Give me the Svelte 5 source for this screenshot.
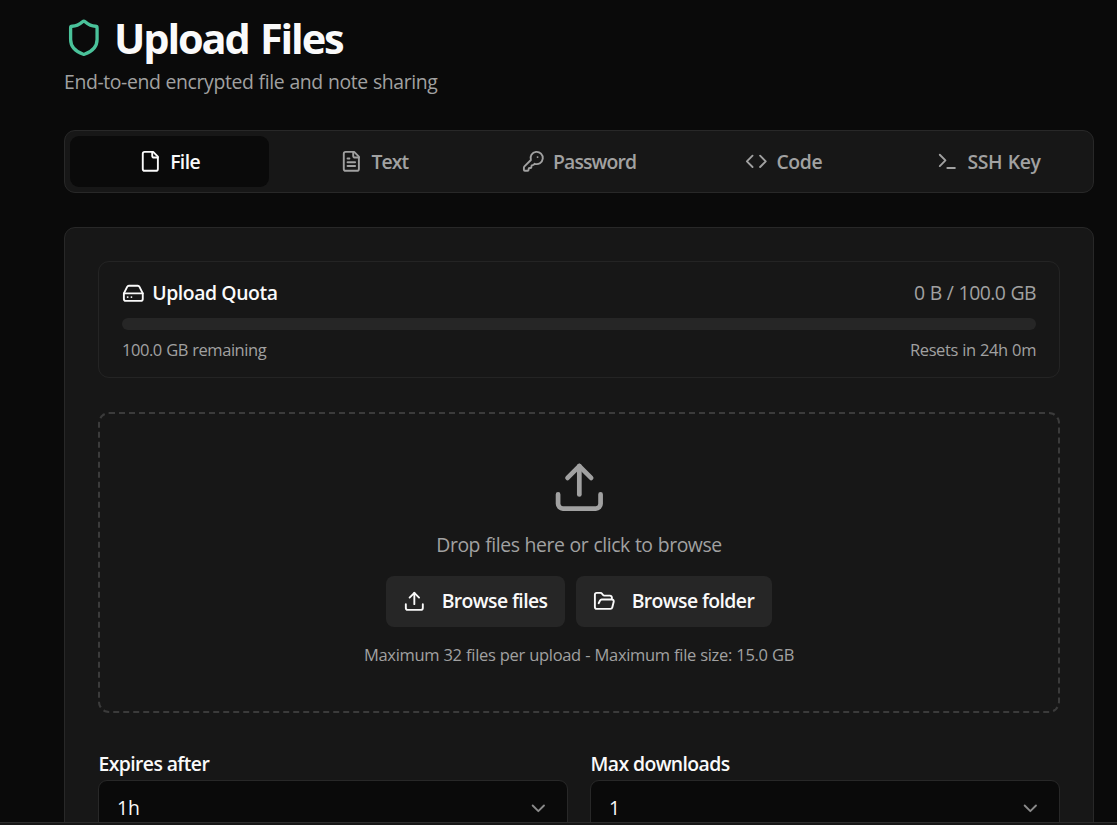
<script>
  const icons = {
    shield: ['M20 13c0 5-3.500 7.500-7.660 8.950a1 1 0 0 1-.67-.01C7.500 20.500 4 18 4 13V6a1 1 0 0 1 1-1c2 0 4.500-1.200 6.240-2.720a1.170 1.170 0 0 1 1.520 0C14.510 3.810 17 5 19 5a1 1 0 0 1 1 1z'],
    file: ['M15 2H6a2 2 0 0 0-2 2v16a2 2 0 0 0 2 2h12a2 2 0 0 0 2-2V7Z', 'M14 2v4a2 2 0 0 0 2 2h4'],
    text: ['M15 2H6a2 2 0 0 0-2 2v16a2 2 0 0 0 2 2h12a2 2 0 0 0 2-2V7Z', 'M14 2v4a2 2 0 0 0 2 2h4', 'M10 9H8', 'M16 13H8', 'M16 17H8'],
    key: ['M2.586 17.414A2 2 0 0 0 2 18.828V21a1 1 0 0 0 1 1h3a1 1 0 0 0 1-1v-1a1 1 0 0 1 1-1h1a1 1 0 0 0 1-1v-1a1 1 0 0 1 1-1h.172a2 2 0 0 0 1.414-.586l.814-.814a6.500 6.500 0 1 0-4-4z', 'M16.500 7.500h.01'],
    code: ['m16 18 6-6-6-6', 'm8 6-6 6 6 6'],
    terminal: ['M12 19h8', 'm4 17 6-6-6-6'],
    drive: ['M22 12H2', 'M5.450 5.110 2 12v6a2 2 0 0 0 2 2h16a2 2 0 0 0 2-2v-6l-3.450-6.890A2 2 0 0 0 16.760 4H7.240a2 2 0 0 0-1.790 1.110z', 'M6 16h.01', 'M10 16h.01'],
    upload: ['M12 3v12', 'm17 8-5-5-5 5', 'M21 15v4a2 2 0 0 1-2 2H5a2 2 0 0 1-2-2v-4'],
    folder: ['m6 14 1.500-2.900A2 2 0 0 1 9.240 10H20a2 2 0 0 1 1.940 2.500l-1.540 6a2 2 0 0 1-1.950 1.500H4a2 2 0 0 1-2-2V5a2 2 0 0 1 2-2h3.900a2 2 0 0 1 1.690.900l.810 1.200a2 2 0 0 0 1.670.900H18a2 2 0 0 1 2 2v2'],
    chevron: ['m6 9 6 6 6-6']
  };
  const tabs = [
    ['file', 'File'],
    ['text', 'Text'],
    ['key', 'Password'],
    ['code', 'Code'],
    ['terminal', 'SSH Key']
  ];
  let active = $state('file');
</script>

{#snippet icon(name)}
  <svg class="icon {name}" viewBox="0 0 24 24" aria-hidden="true">
    {#each icons[name] as d}<path {d} />{/each}
  </svg>
{/snippet}

<div class="shell">
  <main>
    <header>
      <div class="title">{@render icon('shield')}<h1>Upload Files</h1></div>
      <p class="subtitle">End-to-end encrypted file and note sharing</p>
    </header>

    <nav>
      {#each tabs as [id, label]}
        <button class="tab t-{id}" class:active={active === id} onclick={() => (active = id)}>
          {@render icon(id)}<span>{label}</span>
        </button>
      {/each}
    </nav>

    <section class="card">
      <div class="quota">
        <div class="row top">
          <span class="name">{@render icon('drive')}<b>Upload Quota</b></span>
          <span class="used">0 B / 100.0 GB</span>
        </div>
        <div class="bar"></div>
        <div class="row small">
          <span class="remain">100.0 GB remaining</span>
          <span class="resets">Resets in 24h 0m</span>
        </div>
      </div>

      <div class="drop">
        <div class="big">{@render icon('upload')}</div>
        <p class="hint">Drop files here or click to browse</p>
        <div class="buttons">
          <button class="browse files">{@render icon('upload')}<span>Browse files</span></button>
          <button class="browse dir">{@render icon('folder')}<span>Browse folder</span></button>
        </div>
        <p class="limits">Maximum 32 files per upload - Maximum file size: 15.0 GB</p>
      </div>

      <div class="fields">
        <div class="field">
          <span class="label expires">Expires after</span>
          <button class="select"><span>1h</span>{@render icon('chevron')}</button>
        </div>
        <div class="field">
          <span class="label max">Max downloads</span>
          <button class="select"><span>1</span>{@render icon('chevron')}</button>
        </div>
      </div>
    </section>
  </main>
  <footer></footer>
</div>

<style>
  :global(body) { background: #0a0a0a; overflow: hidden; }
  * { box-sizing: border-box; }
  .shell {
    height: 825px;
    display: flex;
    flex-direction: column;
    background: #0a0a0a;
    color: #fafafa;
    font: 19.4px/28px 'Segoe UI', 'Open Sans', 'Noto Sans', sans-serif;
    white-space: nowrap;
  }
  main { flex: 1; min-height: 0; overflow: hidden; padding: 11px 23px 0 64px; }
  footer { height: 3px; flex: none; background: #171717; border-top: 1px solid #2c2c2c; }
  h1, p { margin: 0; }
  button { font: inherit; color: inherit; border: 0; padding: 0; background: none; letter-spacing: inherit; }
  .icon {
    width: 22.67px;
    height: 22.67px;
    flex: none;
    display: block;
    fill: none;
    stroke: currentColor;
    stroke-width: 2;
    stroke-linecap: round;
    stroke-linejoin: round;
  }

  .title { display: flex; align-items: center; gap: 10.3px; height: 53px; }
  .title .icon { width: 39.7px; height: 39.7px; color: #4ac29a; }
  h1 { font-size: 41.500px; line-height: 53px; padding-top: 2px; font-weight: 700; letter-spacing: -2.1px; word-spacing: 2.5px; }
  .subtitle { height: 28px; margin-top: 4px; color: #a1a1a1; letter-spacing: -0.38px; word-spacing: 0.5px; }

  nav {
    width: 1030px;
    height: 63px;
    margin-top: 34px;
    padding: 5px;
    display: grid;
    grid-template-columns: repeat(5, 1fr);
    gap: 5.67px;
    background: #171717;
    border: 1px solid #282828;
    border-radius: 11px;
  }
  .tab {
    display: flex;
    align-items: center;
    justify-content: center;
    gap: 8.5px;
    height: 51px;
    border-radius: 9px;
    color: #a1a1a1;
    font-weight: 600;
    letter-spacing: -0.6px;
  }
  .tab.active { background: #0a0a0a; color: #fafafa; }
  .t-text { letter-spacing: -0.95px; }
  .t-key { letter-spacing: -0.88px; }
  .t-code { letter-spacing: -0.4px; }
  .t-terminal { letter-spacing: -0.4px; word-spacing: 0.8px; }

  .card {
    width: 1030px;
    height: 700px;
    margin-top: 34px;
    padding: 33px;
    background: #171717;
    border: 1px solid #282828;
    border-radius: 11px;
  }
  .quota { height: 117px; padding: 17px 23px; border: 1px solid #242424; border-radius: 11px; }
  .row { display: flex; justify-content: space-between; align-items: center; color: #a1a1a1; }
  .row.top { height: 28px; }
  .name { display: flex; align-items: center; gap: 7.5px; color: #fafafa; }
  b { font-weight: 600; letter-spacing: -0.42px; }
  .used { letter-spacing: -0.55px; word-spacing: 0.7px; }
  .bar { height: 12px; margin: 11px 0 8px; border-radius: 6px; background: #262626; }
  .small { height: 24px; font-size: 16.5px; letter-spacing: -0.45px; word-spacing: 0.5px; }
  .resets { letter-spacing: -0.42px; }

  .drop {
    height: 301px;
    margin-top: 34px;
    padding-top: 44.5px;
    display: flex;
    flex-direction: column;
    align-items: center;
    border: 2px dashed #3b3b3b;
    border-radius: 11px;
    color: #a1a1a1;
  }
  .big .icon { width: 56.67px; height: 56.67px; }
  .hint { margin-top: 16.33px; letter-spacing: -0.43px; word-spacing: 0.5px; }
  .buttons { display: flex; gap: 11px; margin-top: 17px; }
  .browse {
    height: 51px;
    width: 179px;
    padding: 0 17px 1px;
    display: flex;
    align-items: center;
    gap: 16px;
    border-radius: 8px;
    background: #262626;
    color: #fafafa;
    font-weight: 600;
    letter-spacing: -0.6px;
  }
  .dir { width: 196px; }
  .limits { margin-top: 14px; font-size: 16.5px; letter-spacing: -0.33px; word-spacing: 0.4px; }

  .fields { display: grid; grid-template-columns: 1fr 1fr; gap: 22px; margin-top: 37px; }
  .label { display: block; height: 30px; padding-left: 0.5px; font-weight: 600; letter-spacing: -0.6px; }
  .select {
    width: 100%;
    height: 57px;
    padding: 0 17px 1px 18px;
    display: flex;
    align-items: center;
    justify-content: space-between;
    background: #0a0a0a;
    border: 1px solid #282828;
    border-radius: 9px;
  }
  .select .icon { color: #8a8a8a; }
</style>
